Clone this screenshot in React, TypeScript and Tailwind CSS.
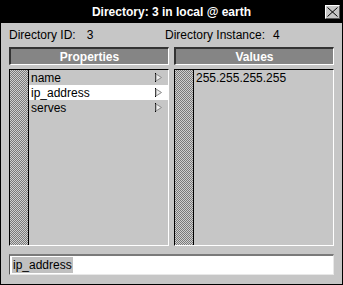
import React from "react";

const checker =
  "bg-[repeating-conic-gradient(#7a7a7a_0_25%,#d0d0d0_0_50%)] bg-[length:2px_2px]";

const Arrow = () => (
  <svg width="7" height="9" viewBox="0 0 7 9" className="shrink-0">
    <line x1="0.5" y1="0" x2="0.5" y2="9" stroke="#000" />
    <polygon points="1,1 6.5,4.5 1,8" fill="#eeeeee" stroke="#8a8a8a" strokeWidth="1" />
  </svg>
);

const Header = ({ label }: { label: string }) => (
  <div className="h-[18px] flex items-center justify-center bg-[#858585] border-t-2 border-l-2 border-b border-r border-t-[#333] border-l-[#333] border-b-white border-r-white text-white font-bold text-[12px] leading-none">
    {label}
  </div>
);

const ListBox = ({ children }: { children?: React.ReactNode }) => (
  <div className="h-[177px] flex border-t border-l border-b border-r border-t-black border-l-black border-b-white border-r-white bg-[#c6c6c6]">
    <div className={`w-[18px] ${checker}`} />
    <div className="w-px bg-black" />
    <div className="flex-1 flex flex-col">{children}</div>
  </div>
);

const properties = ["name", "ip_address", "serves"];

export default function App() {
  return (
    <div
      className="w-[343px] h-[285px] bg-[#c6c6c6] border border-black flex flex-col text-black"
      style={{ fontFamily: '"Liberation Sans", Arial, sans-serif' }}
    >
      <div className="h-[22px] bg-black grid grid-cols-[1fr_auto_1fr] items-center">
        <div />
        <div className="text-white font-bold text-[12px] leading-none">
          Directory: 3 in local @ earth
        </div>
        <div className="flex justify-end pr-[2px]">
          <button className="w-[15px] h-[14px] bg-[#c6c6c6] flex items-center justify-center border-t border-l border-white border-b border-r border-b-[#555] border-r-[#555]">
            <svg width="11" height="10" viewBox="0 0 11 10">
              <line x1="0.5" y1="0.5" x2="10.5" y2="9.5" stroke="#000" />
              <line x1="10.5" y1="0.5" x2="0.5" y2="9.5" stroke="#000" />
            </svg>
          </button>
        </div>
      </div>

      <div className="flex-1 flex flex-col px-[8px]">
        <div className="h-[24px] flex items-center text-[12px] leading-none">
          <div className="w-[156px] flex">
            <span>Directory ID:</span>
            <span className="ml-[11px]">3</span>
          </div>
          <div className="flex">
            <span>Directory Instance:</span>
            <span className="ml-[8px]">4</span>
          </div>
        </div>

        <div className="grid grid-cols-2 gap-[5px]">
          <Header label="Properties" />
          <Header label="Values" />
        </div>

        <div className="grid grid-cols-2 gap-[5px] mt-[4px]">
          <ListBox>
            {properties.map((p) => (
              <div
                key={p}
                className={`h-[15px] flex items-center justify-between pl-[2px] pr-[6px] text-[12px] leading-none ${
                  p === "ip_address" ? "bg-white" : ""
                }`}
              >
                <span>{p}</span>
                <Arrow />
              </div>
            ))}
          </ListBox>
          <ListBox>
            <div className="h-[15px] flex items-center pl-[2px] text-[12px] leading-none">
              255.255.255.255
            </div>
          </ListBox>
        </div>

        <div className="mt-[8px] h-[21px] bg-white border-t-2 border-l border-b border-r border-t-[#7a7a7a] border-l-[#555] border-b-[#e8e8e8] border-r-[#e8e8e8] flex items-center px-[2px]">
          <span className="bg-[#c0c0c0] text-[12px] leading-[16px] px-px">ip_address</span>
        </div>
      </div>
    </div>
  );
}
